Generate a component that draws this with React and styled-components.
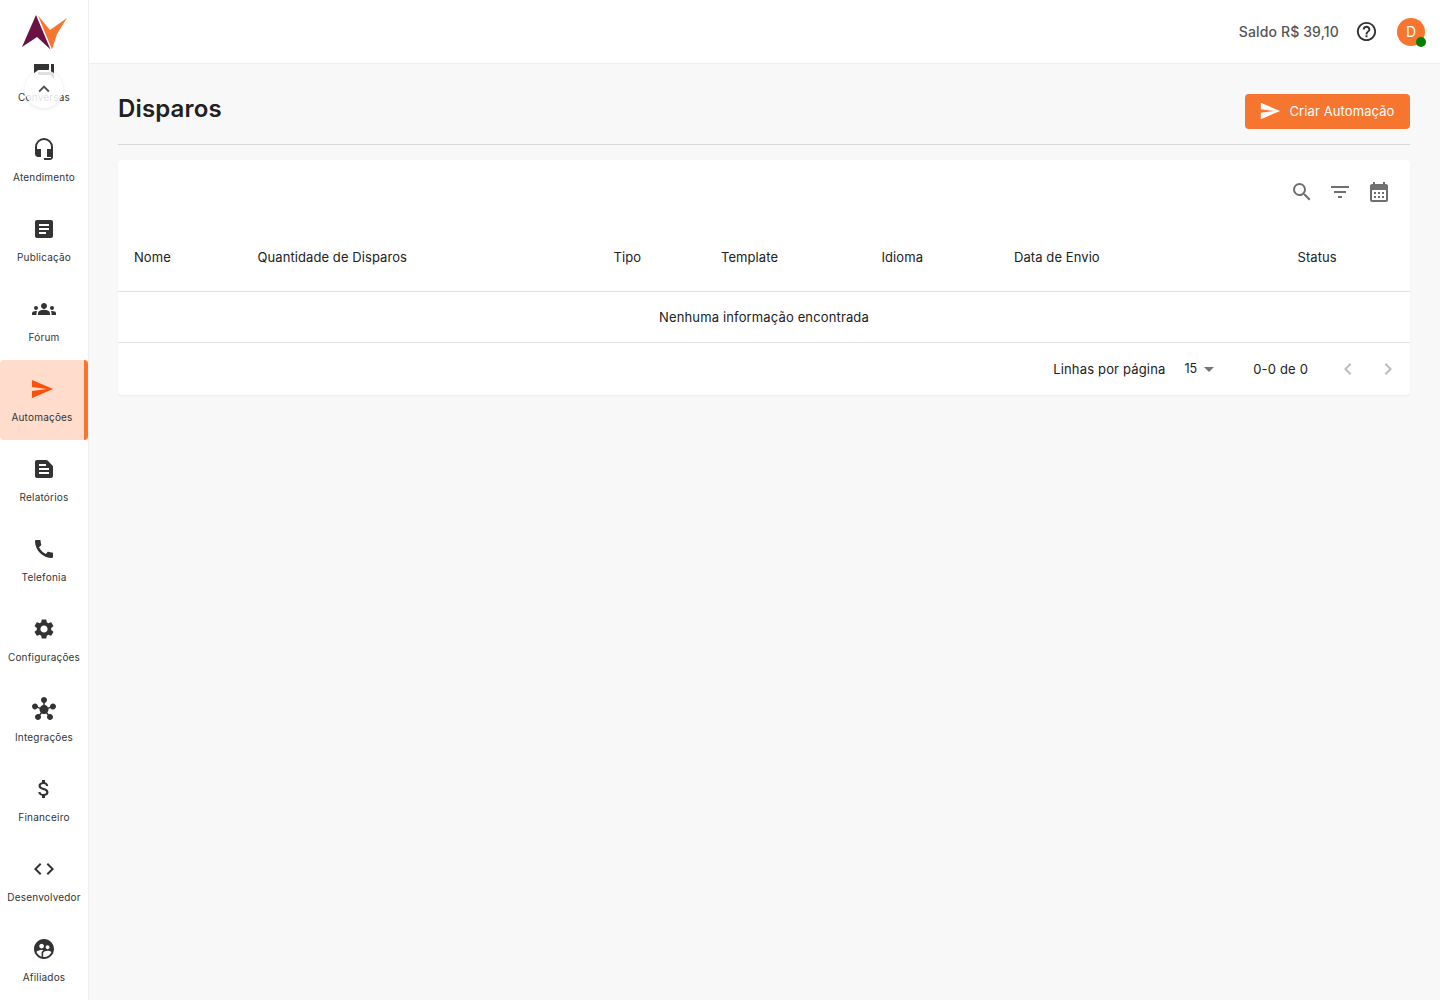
import React from "react";
import styled, { createGlobalStyle } from "styled-components";
import {
  MdForum,
  MdHeadsetMic,
  MdArticle,
  MdGroups,
  MdSend,
  MdTextSnippet,
  MdCall,
  MdSettings,
  MdHub,
  MdAttachMoney,
  MdCode,
  MdSupervisedUserCircle,
  MdKeyboardArrowUp,
  MdHelpOutline,
  MdSearch,
  MdFilterList,
  MdCalendarMonth,
  MdArrowDropDown,
  MdChevronLeft,
  MdChevronRight,
} from "react-icons/md";

const menu = [
  { label: "Conversas", icon: MdForum },
  { label: "Atendimento", icon: MdHeadsetMic },
  { label: "Publicação", icon: MdArticle },
  { label: "Fórum", icon: MdGroups },
  { label: "Automações", icon: MdSend, active: true },
  { label: "Relatórios", icon: MdTextSnippet },
  { label: "Telefonia", icon: MdCall },
  { label: "Configurações", icon: MdSettings },
  { label: "Integrações", icon: MdHub },
  { label: "Financeiro", icon: MdAttachMoney },
  { label: "Desenvolvedor", icon: MdCode },
  { label: "Afiliados", icon: MdSupervisedUserCircle },
];

const columns = [
  { label: "Nome", width: 123.5 },
  { label: "Quantidade de Disparos", width: 356 },
  { label: "Tipo", width: 107.5 },
  { label: "Template", width: 160.5 },
  { label: "Idioma", width: 132.5 },
  { label: "Data de Envio", width: 283.5 },
  { label: "Status", width: 128.5 },
];

const App = () => {
  return (
    <>
      <GlobalStyle />
      <Layout>
        <Sidebar>
          <LogoBox>
            <svg width="46" height="36" viewBox="0 0 46 36">
              <path d="M15 1 L1 33 L16 23 L29.5 35.5 Z" fill="#6b1244" />
              <path d="M17 1.5 L29 16 L46 4 L36 20 L31 35.5 Z" fill="#f6762f" />
            </svg>
          </LogoBox>
          <MenuClip>
            <MenuList>
              {menu.map((item) => (
                <MenuItem key={item.label} $active={item.active}>
                  <item.icon size={24} />
                  <span>{item.label}</span>
                </MenuItem>
              ))}
            </MenuList>
          </MenuClip>
          <ScrollUp>
            <MdKeyboardArrowUp size={22} />
          </ScrollUp>
        </Sidebar>
        <Main>
          <TopBar>
            <Balance>Saldo R$ 39,10</Balance>
            <MdHelpOutline size={23} color="#333" />
            <Avatar>
              D<OnlineDot />
            </Avatar>
          </TopBar>
          <Content>
            <PageHead>
              <Title>Disparos</Title>
              <PrimaryButton>
                <MdSend size={22} />
                Criar Automação
              </PrimaryButton>
            </PageHead>
            <Card>
              <Toolbar>
                <SearchIcon size={24} />
                <MdFilterList size={24} />
                <MdCalendarMonth size={24} />
              </Toolbar>
              <Table>
                <colgroup>
                  {columns.map((col) => (
                    <col key={col.label} style={{ width: col.width }} />
                  ))}
                </colgroup>
                <thead>
                  <tr>
                    {columns.map((col) => (
                      <HeadCell key={col.label}>{col.label}</HeadCell>
                    ))}
                  </tr>
                </thead>
                <tbody>
                  <tr>
                    <EmptyCell colSpan={columns.length}>
                      Nenhuma informação encontrada
                    </EmptyCell>
                  </tr>
                </tbody>
              </Table>
              <Pagination>
                <span>Linhas por página</span>
                <PageSize>
                  <span>15</span>
                  <MdArrowDropDown size={24} color="#757575" />
                </PageSize>
                <PageCount>0-0 de 0</PageCount>
                <PageArrows>
                  <MdChevronLeft size={24} />
                  <MdChevronRight size={24} />
                </PageArrows>
              </Pagination>
            </Card>
          </Content>
        </Main>
      </Layout>
    </>
  );
};

const GlobalStyle = createGlobalStyle`
  html, body {
    margin: 0;
    padding: 0;
  }

  body {
    font-family: Inter, "Liberation Sans", sans-serif;
    color: #212121;
    background: #f8f8f8;
  }
`;

const Layout = styled.div`
  display: flex;
  height: 1000px;
  overflow: hidden;
`;

const Sidebar = styled.aside`
  position: relative;
  width: 89px;
  box-sizing: border-box;
  flex-shrink: 0;
  display: flex;
  flex-direction: column;
  background: #fff;
  border-right: 1px solid #eeeeee;
`;

const LogoBox = styled.div`
  height: 64px;
  flex-shrink: 0;
  display: flex;
  align-items: flex-start;
  padding: 14px 0 0 21px;
  box-sizing: border-box;
  background: #fff;
`;

const MenuClip = styled.nav`
  flex: 1;
  overflow: hidden;
`;

const MenuList = styled.div`
  margin-top: -24px;
`;

const MenuItem = styled.div`
  height: 80px;
  box-sizing: border-box;
  display: flex;
  flex-direction: column;
  align-items: center;
  padding-top: 17px;
  gap: 8px;
  color: #333;
  border-radius: 4px;
  background: ${(p) => (p.$active ? "#ffdccc" : "transparent")};
  border-right: ${(p) => (p.$active ? "4px solid #f6762f" : "none")};

  svg {
    color: ${(p) => (p.$active ? "#fb4f0a" : "#333")};
  }

  span {
    font-size: 10px;
    line-height: 16px;
    letter-spacing: 0.2px;
    white-space: nowrap;
  }
`;

const ScrollUp = styled.button`
  position: absolute;
  top: 70px;
  left: 25px;
  width: 38px;
  height: 38px;
  padding: 0;
  border: 0;
  border-radius: 50%;
  background: rgba(255, 255, 255, 0.85);
  box-shadow: 0 1px 4px rgba(0, 0, 0, 0.1);
  display: flex;
  align-items: center;
  justify-content: center;
  color: #555;
`;

const Main = styled.div`
  flex: 1;
  min-width: 0;
  display: flex;
  flex-direction: column;
`;

const TopBar = styled.header`
  height: 64px;
  box-sizing: border-box;
  display: flex;
  align-items: center;
  justify-content: flex-end;
  padding: 0 15px 0 0;
  gap: 16px;
  background: #fff;
  border-bottom: 1px solid #eeeeee;
`;

const Balance = styled.span`
  font-size: 14px;
  font-weight: 500;
  letter-spacing: 0.14px;
  color: #555;
`;

const Avatar = styled.div`
  position: relative;
  width: 28px;
  height: 28px;
  margin-left: 3px;
  border-radius: 50%;
  background: #f6762f;
  color: #fff;
  font-size: 14px;
  display: flex;
  align-items: center;
  justify-content: center;
`;

const OnlineDot = styled.i`
  position: absolute;
  right: -1px;
  bottom: -1px;
  width: 10px;
  height: 10px;
  border-radius: 50%;
  background: #008000;
`;

const Content = styled.main`
  padding: 0 30px 0 29px;
`;

const PageHead = styled.div`
  height: 81px;
  box-sizing: border-box;
  display: flex;
  align-items: flex-start;
  justify-content: space-between;
  border-bottom: 1px solid #d9d9d9;
`;

const Title = styled.h1`
  margin: 30px 0 0;
  font-size: 24px;
  line-height: 30px;
  font-weight: 600;
  letter-spacing: 0.15px;
  color: #212121;
`;

const PrimaryButton = styled.button`
  margin-top: 30px;
  height: 35px;
  width: 165px;
  padding: 0 1px 1px 0;
  border: 0;
  border-radius: 4px;
  background: #f6762f;
  color: #fff;
  font-family: inherit;
  font-size: 13px;
  letter-spacing: 0.1px;
  display: flex;
  align-items: center;
  justify-content: center;
  gap: 8px;
`;

const Card = styled.section`
  margin-top: 15px;
  background: #fff;
  border-radius: 4px;
  box-shadow: 0 1px 2px rgba(0, 0, 0, 0.05);
`;

const Toolbar = styled.div`
  height: 64px;
  box-sizing: border-box;
  display: flex;
  justify-content: flex-end;
  align-items: center;
  gap: 15px;
  padding: 0 19px 0 0;
  color: #6f6f6f;
`;

const SearchIcon = styled(MdSearch)`
  margin-right: -1px;
`;

const Table = styled.table`
  width: 100%;
  table-layout: fixed;
  border-collapse: collapse;
  font-size: 13px;
`;

const HeadCell = styled.th`
  height: 65px;
  padding: 0 16px 2px;
  text-align: left;
  font-weight: 400;
  letter-spacing: 0.08px;
  color: #212121;
  border-bottom: 1px solid #e0e0e0;
  white-space: nowrap;
`;

const EmptyCell = styled.td`
  height: 50px;
  padding: 0;
  text-align: center;
  color: #212121;
  letter-spacing: 0.14px;
  border-bottom: 1px solid #e0e0e0;
`;

const Pagination = styled.div`
  height: 52px;
  display: flex;
  align-items: center;
  justify-content: flex-end;
  padding-right: 10px;
  font-size: 13px;
  letter-spacing: 0.17px;
`;

const PageSize = styled.div`
  margin-left: 19px;
  display: flex;
  align-items: center;
  font-size: 12.5px;
  letter-spacing: 0;

  span {
    margin-bottom: 2px;
  }
`;

const PageCount = styled.span`
  margin-left: 32px;
`;

const PageArrows = styled.div`
  margin-left: 28px;
  display: flex;
  gap: 16px;
  color: #bdbdbd;
`;

export default App;
